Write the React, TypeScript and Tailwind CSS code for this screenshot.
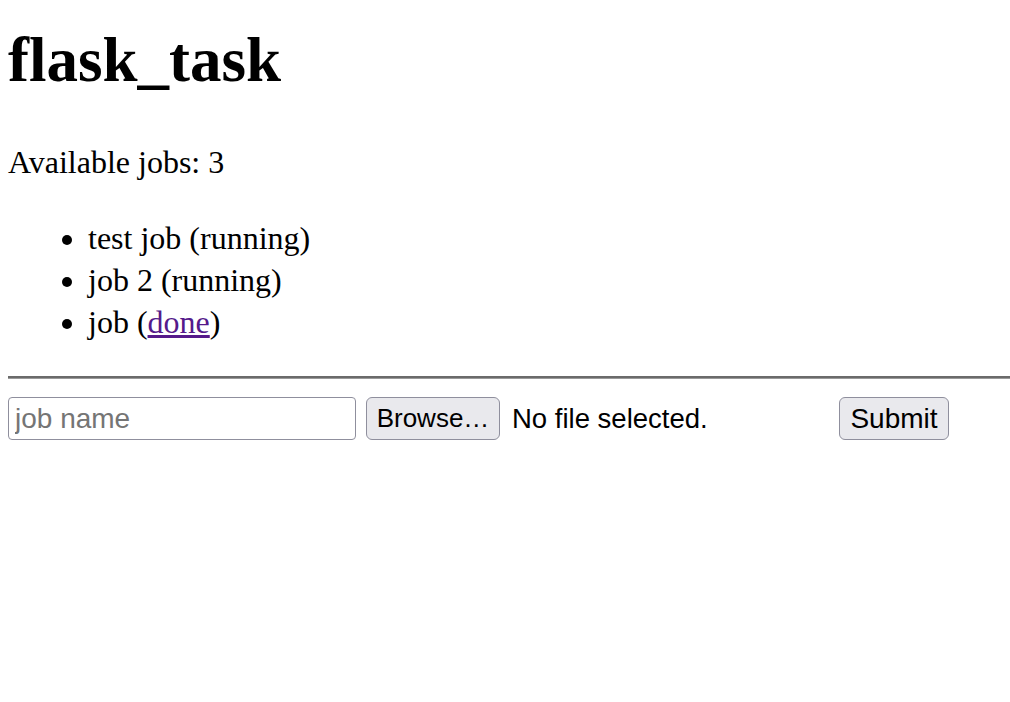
const jobs = [
  { name: 'test job', status: 'running' },
  { name: 'job 2', status: 'running' },
  { name: 'job', status: 'done' },
];

export default function App() {
  return (
    <div className="min-h-screen bg-white px-2 text-black font-['Liberation_Serif','Times_New_Roman',serif]">
      <h1 className="pt-[28px] text-[63px] font-bold leading-[64px]">flask_task</h1>

      <p className="mt-[49px] text-[32px] leading-[42px]">Available jobs: {jobs.length}</p>

      <ul className="mt-[34px] list-disc pl-[80px] text-[32px] leading-[42px]">
        {jobs.map((job) => (
          <li key={job.name}>
            {job.name} (
            {job.status === 'done' ? (
              <a href="#" className="text-[#551a8b] underline">
                done
              </a>
            ) : (
              job.status
            )}
            )
          </li>
        ))}
      </ul>

      <hr className="mt-[33px] -mr-2 h-0 border-t-[2px] border-b-[1px] border-t-[#6b6b6b] border-b-[#9a9a9a]" />

      <form className="mt-[18px] flex items-center font-['Liberation_Sans',Arial,sans-serif] text-[26px]">
        <input
          type="text"
          placeholder="job name"
          className="h-[43px] w-[348px] rounded-[4px] border-[1.5px] border-[#8f8f9d] px-[6px] text-[28px] text-black placeholder:text-[#757575] outline-none"
        />
        <button
          type="button"
          className="ml-[10px] h-[43px] w-[134px] rounded-[6px] border-[1.5px] border-[#8f8f9d] bg-[#e9e9ed] text-black"
        >
          Browse…
        </button>
        <span className="ml-[12px] w-[327px] text-[27.5px]">No file selected.</span>
        <button
          type="submit"
          className="h-[43px] w-[110px] rounded-[6px] border-[1.5px] border-[#8f8f9d] bg-[#e9e9ed] text-[28px] text-black"
        >
          Submit
        </button>
      </form>
    </div>
  );
}
